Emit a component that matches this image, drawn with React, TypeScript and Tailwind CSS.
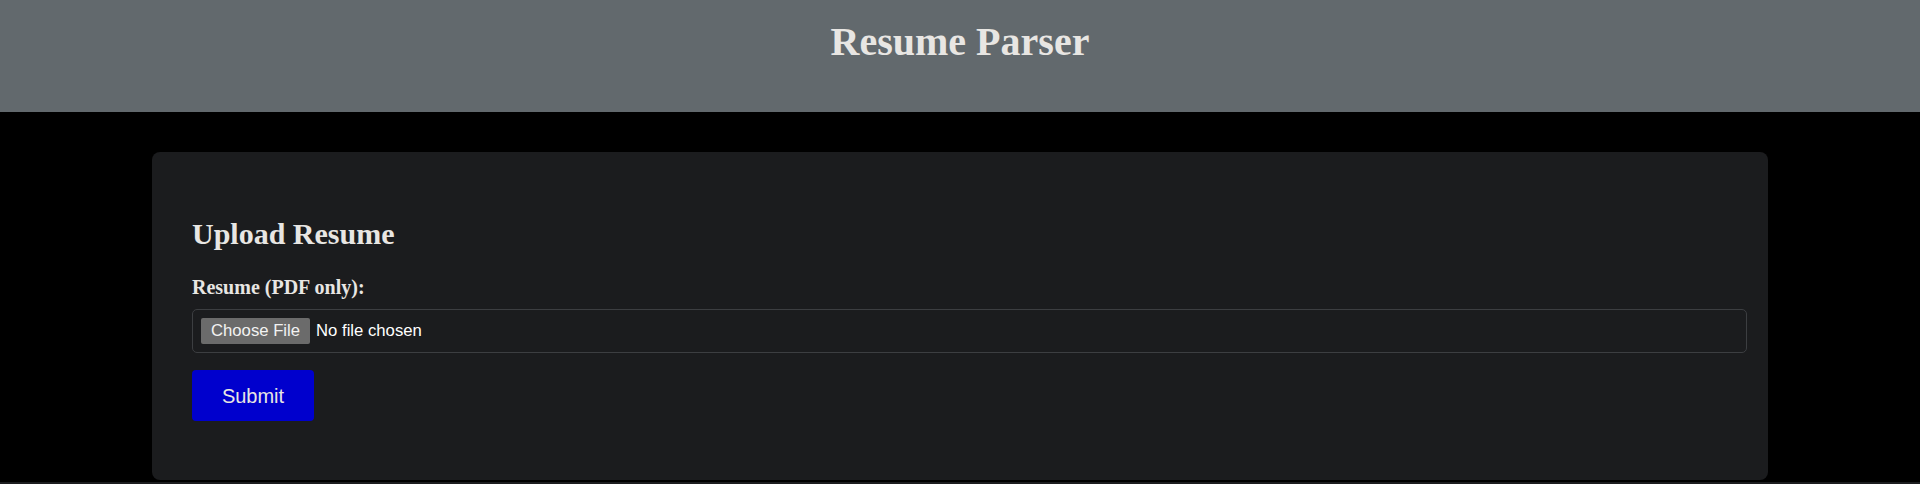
import React from 'react';

export default function App() {
  return (
    <div className="min-h-[484px] bg-black font-['Liberation_Serif',serif] text-[#e8e6e3]">
      <header className="h-[112px] bg-[#62696d] pt-[19px] text-center">
        <h1 className="text-[40px] font-bold leading-[46px]">Resume Parser</h1>
      </header>

      <main className="px-[152px] pt-[40px]">
        <div className="rounded-[8px] bg-[#1b1c1e] px-[40px] pt-[40px] pb-[59px]">
          <h2 className="mt-[25px] mb-[25px] text-[30px] font-bold leading-[34px]">Upload Resume</h2>

          <form onSubmit={(e) => e.preventDefault()}>
            <label htmlFor="resume" className="block text-[20px] font-bold leading-[23px]">
              Resume (PDF only):
            </label>

            <label
              htmlFor="resume"
              className="mt-[10px] flex h-[44px] w-[calc(100%+19px)] cursor-pointer items-center rounded-[5px] border border-[#3c3e41] px-[8px] font-['Liberation_Sans',sans-serif] text-[16.7px] text-white"
            >
              <span className="flex h-[26px] items-center rounded-[2px] bg-[#6b6b6b] px-[10px] text-[#f2f2f2]">
                Choose File
              </span>
              <span className="ml-[6px]">No file chosen</span>
              <input id="resume" type="file" accept="application/pdf" className="hidden" />
            </label>

            <button
              type="submit"
              className="mt-[17px] h-[51px] w-[122px] rounded-[4px] bg-[#0000cd] font-['Liberation_Sans',sans-serif] text-[20px] text-[#e8e6e3]"
            >
              Submit
            </button>
          </form>
        </div>
      </main>

      <div className="mt-[2px] h-[10px] bg-[#1c1d1f]" />
    </div>
  );
}
